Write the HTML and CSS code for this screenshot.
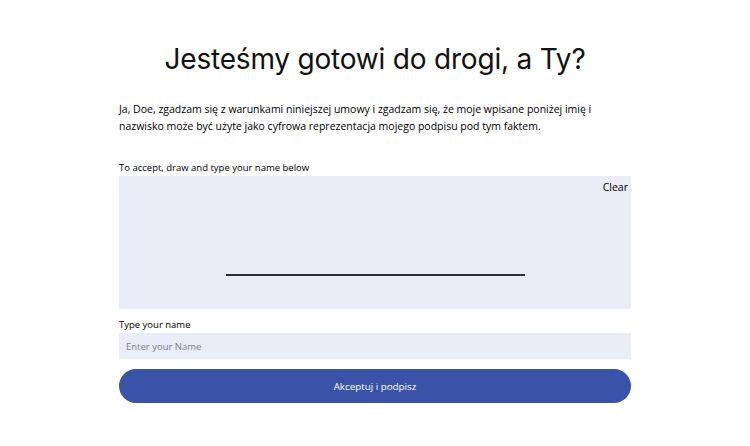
FILE: index.html
```html
<!DOCTYPE html>
<html lang="pl">
<head>
    <meta charset="UTF-8">
    <meta name="viewport" content="width=device-width, initial-scale=1.0">
    <title>Podpis</title>
    <link rel="stylesheet" href="styles.css">
</head>
<body>
    <section class="sign">
        <h1 class="sign-title">Jesteśmy gotowi do drogi, a Ty?</h1>
        <p class="sign-text">Ja, Doe, zgadzam się z warunkami niniejszej umowy i zgadzam się, że moje wpisane poniżej imię i nazwisko może być użyte jako cyfrowa reprezentacja mojego podpisu pod tym faktem.</p>

        <form class="sign-form">
            <label class="field-label">To accept, draw and type your name below</label>
            <div class="pad">
                <button type="button" class="pad-clear">Clear</button>
                <div class="pad-line"></div>
            </div>

            <label class="field-label" for="name">Type your name</label>
            <input type="text" id="name" class="name-input" placeholder="Enter your Name">

            <button type="submit" class="submit">Akceptuj i podpisz</button>
        </form>
    </section>
</body>
</html>
```

FILE: styles.css
```css
body {
    margin: 0;
    background: #fff;
    color: #000;
    font-family: "Open Sans", "Liberation Sans", sans-serif;
}
.sign {
    width: 512px;
    margin: 0 auto;
    padding-top: 40px;
}
.sign-title {
    margin: 0;
    text-align: center;
    font-family: "Inter", "Lato", sans-serif;
    font-weight: 400;
    font-size: 28px;
    line-height: 38px;
    letter-spacing: -0.2px;
    color: #111;
}
.sign-text {
    margin: 23px 0 0;
    font-size: 10.5px;
    line-height: 17px;
}
.sign-form {
    display: flex;
    flex-direction: column;
    margin-top: 26px;
}
.field-label {
    display: block;
    font-size: 9.5px;
    line-height: 14px;
    margin-bottom: 1px;
}
.pad {
    position: relative;
    height: 133px;
    background: #e9edf8;
    display: flex;
    justify-content: center;
    align-items: flex-end;
    margin-bottom: 9px;
}
.pad-clear {
    position: absolute;
    top: 4px;
    right: 3px;
    border: none;
    background: none;
    font-family: inherit;
    font-size: 10.5px;
    color: #000;
    padding: 0;
    cursor: pointer;
}
.pad-line {
    width: 299px;
    height: 2px;
    background: #2a2d33;
    margin-bottom: 33px;
}
.name-input {
    height: 26px;
    border: none;
    background: #e9edf8;
    padding: 0 7px;
    font-family: inherit;
    font-size: 9.5px;
    color: #000;
    outline: none;
}
.name-input::placeholder {
    color: #7c7f87;
}
.submit {
    margin-top: 10px;
    height: 34px;
    border: none;
    border-radius: 17px;
    background: #3a53a8;
    color: #fff;
    font-family: inherit;
    font-size: 9.8px;
    cursor: pointer;
}
```
